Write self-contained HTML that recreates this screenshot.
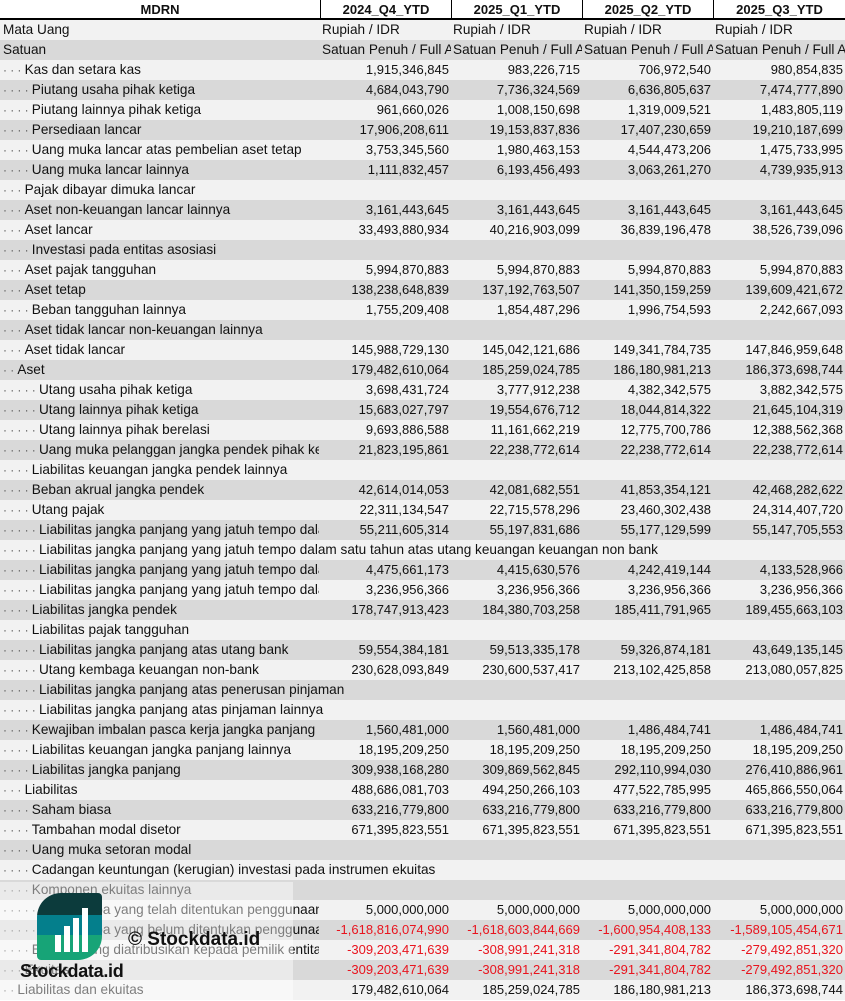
<!DOCTYPE html>
<html><head><meta charset="utf-8"><style>
*{margin:0;padding:0;box-sizing:border-box}
body{width:845px;height:1001px;overflow:hidden;background:#fff;font-family:"Liberation Sans",sans-serif;font-size:13.6px;color:#111}
.r{position:relative;height:20px;line-height:20px;white-space:nowrap}
.r:nth-child(even){background:#f2f2f2}
.r:nth-child(odd){background:#d9d9d9}
.r.h{background:#fff;font-weight:bold;border-bottom:2px solid #000;height:20px;line-height:19px;font-size:13px}
.c{position:absolute;top:0;height:20px;overflow:hidden}
.l{left:3px;width:316px}
.l.w{width:840px}
.v{text-align:right;padding-right:2px;font-size:13px}
.c1{left:320px;width:131px}.c2{left:451px;width:131px}.c3{left:582px;width:131px}.c4{left:713px;width:132px}
.t{text-align:left;padding-left:2px;padding-right:0;font-size:13.6px}
.h .c{text-align:center;border-left:1px solid #000;padding:0}
.h .l{left:0;width:320px;border-left:none}
.neg{color:#e8141e}
.d{color:#555;letter-spacing:3.2px;font-size:12px}
</style></head><body>
<div id="t">
<div class="r h"><div class="c l">MDRN</div><div class="c c1">2024_Q4_YTD</div><div class="c c2">2025_Q1_YTD</div><div class="c c3">2025_Q2_YTD</div><div class="c c4">2025_Q3_YTD</div></div>
<div class="r"><div class="c l">Mata Uang</div><div class="c c1 t">Rupiah / IDR</div><div class="c c2 t">Rupiah / IDR</div><div class="c c3 t">Rupiah / IDR</div><div class="c c4 t">Rupiah / IDR</div></div>
<div class="r"><div class="c l">Satuan</div><div class="c c1 t">Satuan Penuh / Full Amount</div><div class="c c2 t">Satuan Penuh / Full Amount</div><div class="c c3 t">Satuan Penuh / Full Amount</div><div class="c c4 t">Satuan Penuh / Full Amount</div></div>
</div>
<script>
var R=[
[3,"Kas dan setara kas","1,915,346,845","983,226,715","706,972,540","980,854,835"],
[4,"Piutang usaha pihak ketiga","4,684,043,790","7,736,324,569","6,636,805,637","7,474,777,890"],
[4,"Piutang lainnya pihak ketiga","961,660,026","1,008,150,698","1,319,009,521","1,483,805,119"],
[4,"Persediaan lancar","17,906,208,611","19,153,837,836","17,407,230,659","19,210,187,699"],
[4,"Uang muka lancar atas pembelian aset tetap","3,753,345,560","1,980,463,153","4,544,473,206","1,475,733,995"],
[4,"Uang muka lancar lainnya","1,111,832,457","6,193,456,493","3,063,261,270","4,739,935,913"],
[3,"Pajak dibayar dimuka lancar"],
[3,"Aset non-keuangan lancar lainnya","3,161,443,645","3,161,443,645","3,161,443,645","3,161,443,645"],
[3,"Aset lancar","33,493,880,934","40,216,903,099","36,839,196,478","38,526,739,096"],
[4,"Investasi pada entitas asosiasi"],
[3,"Aset pajak tangguhan","5,994,870,883","5,994,870,883","5,994,870,883","5,994,870,883"],
[3,"Aset tetap","138,238,648,839","137,192,763,507","141,350,159,259","139,609,421,672"],
[4,"Beban tangguhan lainnya","1,755,209,408","1,854,487,296","1,996,754,593","2,242,667,093"],
[3,"Aset tidak lancar non-keuangan lainnya"],
[3,"Aset tidak lancar","145,988,729,130","145,042,121,686","149,341,784,735","147,846,959,648"],
[2,"Aset","179,482,610,064","185,259,024,785","186,180,981,213","186,373,698,744"],
[5,"Utang usaha pihak ketiga","3,698,431,724","3,777,912,238","4,382,342,575","3,882,342,575"],
[5,"Utang lainnya pihak ketiga","15,683,027,797","19,554,676,712","18,044,814,322","21,645,104,319"],
[5,"Utang lainnya pihak berelasi","9,693,886,588","11,161,662,219","12,775,700,786","12,388,562,368"],
[5,"Uang muka pelanggan jangka pendek pihak ketiga","21,823,195,861","22,238,772,614","22,238,772,614","22,238,772,614"],
[4,"Liabilitas keuangan jangka pendek lainnya"],
[4,"Beban akrual jangka pendek","42,614,014,053","42,081,682,551","41,853,354,121","42,468,282,622"],
[4,"Utang pajak","22,311,134,547","22,715,578,296","23,460,302,438","24,314,407,720"],
[5,"Liabilitas jangka panjang yang jatuh tempo dalam satu tahun","55,211,605,314","55,197,831,686","55,177,129,599","55,147,705,553"],
[5,"Liabilitas jangka panjang yang jatuh tempo dalam satu tahun atas utang keuangan keuangan non bank"],
[5,"Liabilitas jangka panjang yang jatuh tempo dalam satu tahun","4,475,661,173","4,415,630,576","4,242,419,144","4,133,528,966"],
[5,"Liabilitas jangka panjang yang jatuh tempo dalam satu tahun","3,236,956,366","3,236,956,366","3,236,956,366","3,236,956,366"],
[4,"Liabilitas jangka pendek","178,747,913,423","184,380,703,258","185,411,791,965","189,455,663,103"],
[4,"Liabilitas pajak tangguhan"],
[5,"Liabilitas jangka panjang atas utang bank","59,554,384,181","59,513,335,178","59,326,874,181","43,649,135,145"],
[5,"Utang kembaga keuangan non-bank","230,628,093,849","230,600,537,417","213,102,425,858","213,080,057,825"],
[5,"Liabilitas jangka panjang atas penerusan pinjaman"],
[5,"Liabilitas jangka panjang atas pinjaman lainnya"],
[4,"Kewajiban imbalan pasca kerja jangka panjang","1,560,481,000","1,560,481,000","1,486,484,741","1,486,484,741"],
[4,"Liabilitas keuangan jangka panjang lainnya","18,195,209,250","18,195,209,250","18,195,209,250","18,195,209,250"],
[4,"Liabilitas jangka panjang","309,938,168,280","309,869,562,845","292,110,994,030","276,410,886,961"],
[3,"Liabilitas","488,686,081,703","494,250,266,103","477,522,785,995","465,866,550,064"],
[4,"Saham biasa","633,216,779,800","633,216,779,800","633,216,779,800","633,216,779,800"],
[4,"Tambahan modal disetor","671,395,823,551","671,395,823,551","671,395,823,551","671,395,823,551"],
[4,"Uang muka setoran modal"],
[4,"Cadangan keuntungan (kerugian) investasi pada instrumen ekuitas"],
[4,"Komponen ekuitas lainnya"],
[6,"Saldo laba yang telah ditentukan penggunaannya","5,000,000,000","5,000,000,000","5,000,000,000","5,000,000,000"],
[6,"Saldo laba yang belum ditentukan penggunaannya","-1,618,816,074,990","-1,618,603,844,669","-1,600,954,408,133","-1,589,105,454,671"],
[4,"Ekuitas yang diatribusikan kepada pemilik entitas induk","-309,203,471,639","-308,991,241,318","-291,341,804,782","-279,492,851,320"],
[3,"Ekuitas","-309,203,471,639","-308,991,241,318","-291,341,804,782","-279,492,851,320"],
[2,"Liabilitas dan ekuitas","179,482,610,064","185,259,024,785","186,180,981,213","186,373,698,744"]
];
var h="";
R.forEach(function(a){
 var d="";for(var i=0;i<a[0];i++)d+="·";
 var w=a.length<3?" w":"";
 h+='<div class="r"><div class="c l'+w+'"><span class="d">'+d+'</span>'+a[1]+'</div>';
 for(var k=2;k<a.length;k++){h+='<div class="c v c'+(k-1)+(a[k][0]=="-"?" neg":"")+'">'+a[k]+'</div>';}
 h+='</div>';
});
document.getElementById("t").insertAdjacentHTML("beforeend",h);
</script>
<div style="position:absolute;left:0;top:882px;width:293px;height:119px;background:rgba(255,255,255,0.45)"></div>
<div style="position:absolute;left:37px;top:893px;width:65px;height:67px;border-radius:24px 4px 24px 4px;overflow:hidden;background:linear-gradient(#0c3b3c 0 33%,#047f8c 33% 63%,#17a477 63%)">
 <div style="position:absolute;left:18px;top:42px;width:6px;height:17px;background:#fff"></div>
 <div style="position:absolute;left:27px;top:33px;width:6px;height:26px;background:#fff"></div>
 <div style="position:absolute;left:36px;top:25px;width:6px;height:34px;background:#fff"></div>
 <div style="position:absolute;left:45px;top:15px;width:6px;height:44px;background:#fff"></div>
</div>
<div style="position:absolute;left:128px;top:928px;font-size:19px;font-weight:bold;color:#111;line-height:24px">© Stockdata.id</div>
<div style="position:absolute;left:20px;top:960px;font-size:18px;font-weight:bold;color:#111;line-height:22px;letter-spacing:-0.3px">Stockdata.id</div>
</body></html>
